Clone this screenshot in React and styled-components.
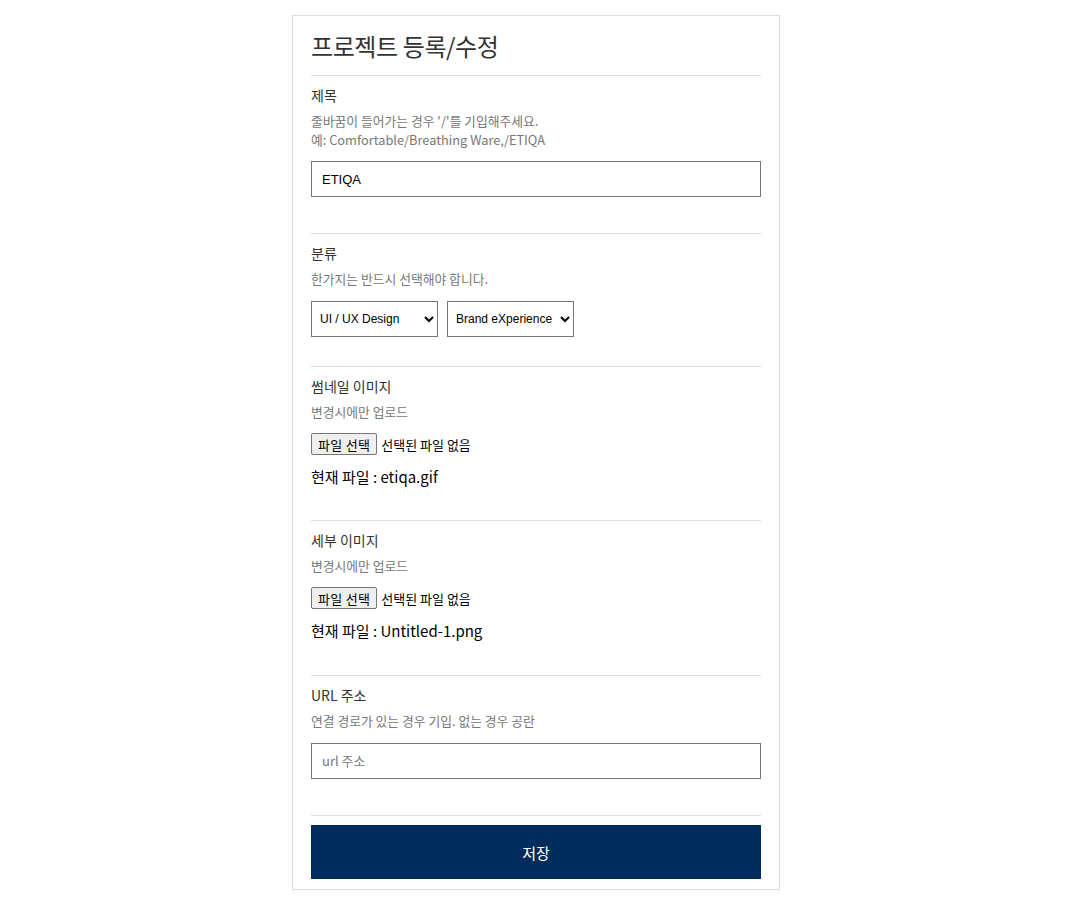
import React from 'react';
import styled, { createGlobalStyle } from 'styled-components';

const Global = createGlobalStyle`
  body {
    margin: 0;
    background: #fff;
    font-family: "Noto Sans CJK KR", "Noto Sans", sans-serif;
    color: #333;
  }
`;

const Page = styled.div`
  display: flex;
  justify-content: center;
  padding: 15px 0 9px 2px;
`;

const Card = styled.form`
  width: 450px;
  padding: 0 18px 10px;
  border: 1px solid #ddd;
  display: flex;
  flex-direction: column;
`;

const Heading = styled.h1`
  margin: 0;
  height: 59px;
  display: flex;
  align-items: center;
  font-size: 24px;
  font-weight: 400;
  color: #333;
  letter-spacing: -0.4px;
`;

const Section = styled.section`
  border-top: 1px solid #ddd;
  padding: 9px 0 ${({ bottom }) => bottom}px;
`;

const Label = styled.div`
  font-size: 14px;
  line-height: 20px;
  color: #333;
`;

const Help = styled.p`
  margin: 6px 0 ${({ after = 12 }) => after}px;
  font-size: 12.8px;
  line-height: 19px;
  color: #777;
`;

const TextInput = styled.input`
  box-sizing: border-box;
  display: block;
  width: 100%;
  height: 36px;
  padding: 0 10px;
  border: 1px solid #767676;
  border-radius: 0;
  font-family: "Liberation Sans", Arial, sans-serif;
  font-size: 13px;
  color: #000;
  outline: none;
  &::placeholder {
    color: #777;
    font-family: "Noto Sans CJK KR", "Liberation Sans", sans-serif;
  }
`;

const SelectRow = styled.div`
  display: flex;
  gap: 9px;
`;

const Select = styled.select`
  box-sizing: border-box;
  width: 127px;
  height: 36px;
  padding: 0 4px;
  border: 1px solid #767676;
  border-radius: 0;
  background: #fff;
  font-family: "Liberation Sans", Arial, sans-serif;
  font-size: 12px;
  color: #000;
`;

const FileRow = styled.div`
  display: flex;
  align-items: center;
  gap: 4px;
  height: 22px;
  font-size: 13px;
  color: #000;
`;

const FileButton = styled.button`
  height: 22px;
  padding: 0 6px;
  border: 1px solid #767676;
  border-radius: 2px;
  background: #efefef;
  font-family: "Noto Sans CJK KR", sans-serif;
  font-size: 13px;
  letter-spacing: 0.3px;
  color: #000;
`;

const Current = styled.div`
  margin-top: 11px;
  font-size: 15px;
  line-height: 22px;
  color: #000;
`;

const Footer = styled.div`
  border-top: 1px solid #ddd;
  padding-top: 9px;
  display: flex;
  flex-direction: column;
`;

const SaveButton = styled.button`
  height: 54px;
  border: 0;
  background: #002d5b;
  color: #fff;
  font-family: "Noto Sans CJK KR", sans-serif;
  font-size: 15px;
`;

function FileField({ current }) {
  return (
    <>
      <FileRow>
        <FileButton type="button">파일 선택</FileButton>
        <span>선택된 파일 없음</span>
      </FileRow>
      <Current>현재 파일 : {current}</Current>
    </>
  );
}

export default function App() {
  return (
    <Page>
      <Global />
      <Card onSubmit={(e) => e.preventDefault()}>
        <Heading>프로젝트 등록/수정</Heading>

        <Section bottom={36}>
          <Label>제목</Label>
          <Help>
            줄바꿈이 들어가는 경우 '/'를 기입해주세요.
            <br />
            예: Comfortable/Breathing Ware,/ETIQA
          </Help>
          <TextInput defaultValue="ETIQA" />
        </Section>

        <Section bottom={29}>
          <Label>분류</Label>
          <Help after={13}>한가지는 반드시 선택해야 합니다.</Help>
          <SelectRow>
            <Select defaultValue="ux">
              <option value="ux">UI / UX Design</option>
            </Select>
            <Select defaultValue="bx">
              <option value="bx">Brand eXperience</option>
            </Select>
          </SelectRow>
        </Section>

        <Section bottom={32}>
          <Label>썸네일 이미지</Label>
          <Help>변경시에만 업로드</Help>
          <FileField current="etiqa.gif" />
        </Section>

        <Section bottom={33}>
          <Label>세부 이미지</Label>
          <Help>변경시에만 업로드</Help>
          <FileField current="Untitled-1.png" />
        </Section>

        <Section bottom={36}>
          <Label>URL 주소</Label>
          <Help after={13}>연결 경로가 있는 경우 기입. 없는 경우 공란</Help>
          <TextInput placeholder="url 주소" />
        </Section>

        <Footer>
          <SaveButton type="submit">저장</SaveButton>
        </Footer>
      </Card>
    </Page>
  );
}
